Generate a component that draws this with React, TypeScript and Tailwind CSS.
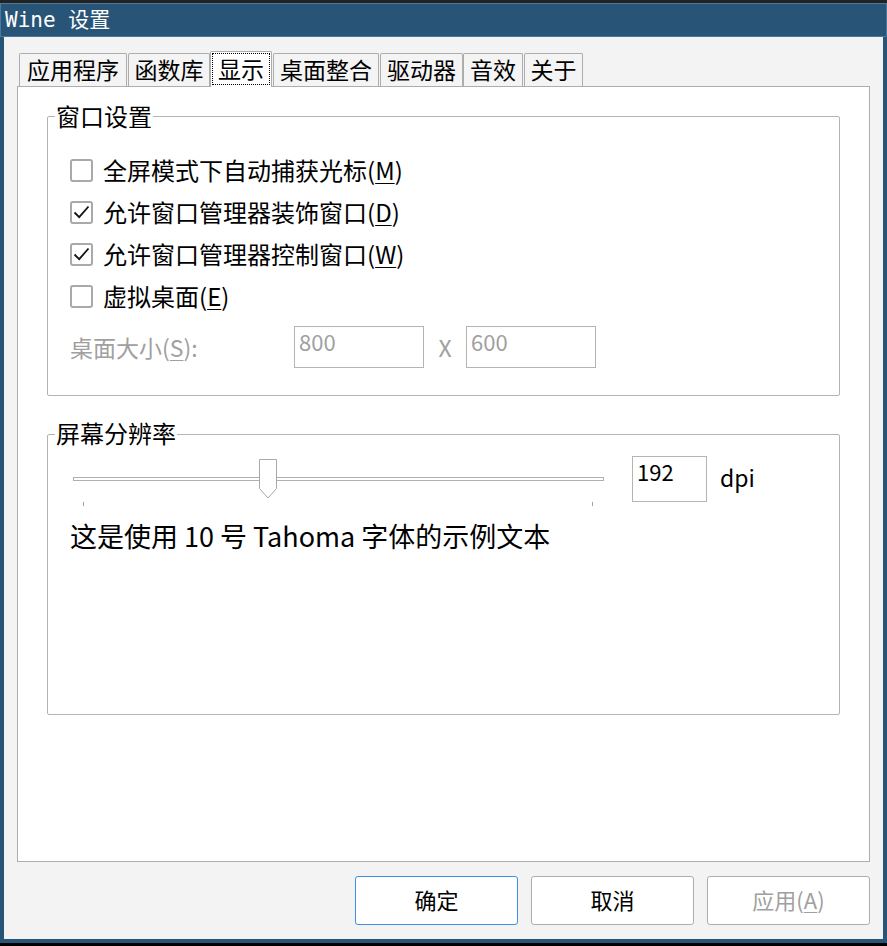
import React from "react";

function U({ c }: { c: string }) {
  return <span className="underline underline-offset-[3px] decoration-1">{c}</span>;
}

function Check({ checked }: { checked: boolean }) {
  return (
    <div className="w-[23px] h-[23px] rounded-[3px] border-2 border-[#a9a9a9] bg-white flex items-center justify-center shrink-0">
      {checked && (
        <svg width="19" height="19" viewBox="0 0 19 19">
          <path d="M2.5 9.5 L7.2 14.2 L16.5 3.5" fill="none" stroke="#111" strokeWidth="1.8" />
        </svg>
      )}
    </div>
  );
}

const tabs: { label: string; w: string; ml: string; sel?: boolean }[] = [
  { label: "应用程序", w: "w-[108px]", ml: "ml-[2px]" },
  { label: "函数库", w: "w-[82px]", ml: "ml-[1px]" },
  { label: "显示", w: "w-[62px]", ml: "ml-0", sel: true },
  { label: "桌面整合", w: "w-[106px]", ml: "ml-[1px]" },
  { label: "驱动器", w: "w-[83px]", ml: "ml-[1px]" },
  { label: "音效", w: "w-[60px]", ml: "ml-0" },
  { label: "关于", w: "w-[59px]", ml: "ml-[1px]" },
];

export default function App() {
  return (
    <div className="w-[887px] h-[946px] bg-black flex flex-col font-['Noto_Sans_CJK_SC','Noto_Sans',sans-serif]">
      <div className="h-[3px] bg-[#222222] shrink-0" />
      <div className="flex-1 flex flex-col bg-[#285577] min-h-0">
        {/* title bar */}
        <div className="h-[34px] shrink-0 border border-[#4c7899] flex items-center pl-[4px] text-white text-[21px] leading-[24px] font-['DejaVu_Sans_Mono','Noto_Sans_CJK_SC',monospace] whitespace-pre">
          Wine 设置
        </div>
        {/* body */}
        <div className="flex-1 mx-[4px] mb-[4px] bg-[#f3f3f3] px-[13px] flex flex-col min-h-0">
          {/* tabs */}
          <div className="h-[49px] shrink-0 flex items-end pt-[14px]">
            {tabs.map((t) =>
              t.sel ? (
                <div
                  key={t.label}
                  className={`${t.w} ${t.ml} h-[36px] -mb-px relative z-10 bg-white border border-b-0 border-[#adadad] rounded-t-[2px] p-[1px] pb-[2px] flex`}
                >
                  <div className="flex-1 border border-dotted border-black flex items-center justify-center pb-[3px] text-[23px] leading-[28px] text-black">
                    {t.label}
                  </div>
                </div>
              ) : (
                <div
                  key={t.label}
                  className={`${t.w} ${t.ml} h-[33px] bg-[#f4f4f4] border border-b-0 border-[#adadad] rounded-t-[2px] flex items-center justify-center pb-[3px] text-[23px] leading-[28px] text-black`}
                >
                  {t.label}
                </div>
              )
            )}
          </div>
          {/* panel */}
          <div className="h-[776px] shrink-0 border border-[#adadad] bg-white px-[29px] flex flex-col">
            {/* group 1 */}
            <div className="mt-[29px] h-[280px] border border-[#b4b4b4] rounded-[2px] flex flex-col">
              <div className="-mt-[15px] ml-[7px] px-[1px] bg-white w-fit text-[24px] leading-[28px] text-black">窗口设置</div>
              <div className="pt-[19px] flex flex-col">
                <div className="h-[42px] flex items-center pl-[22px] gap-[10px]">
                  <Check checked={false} />
                  <span className="text-[24px] leading-[30px] text-black">
                    全屏模式下自动捕获光标(<U c="M" />)
                  </span>
                </div>
                <div className="h-[42px] flex items-center pl-[22px] gap-[10px]">
                  <Check checked={true} />
                  <span className="text-[24px] leading-[30px] text-black">
                    允许窗口管理器装饰窗口(<U c="D" />)
                  </span>
                </div>
                <div className="h-[42px] flex items-center pl-[22px] gap-[10px]">
                  <Check checked={true} />
                  <span className="text-[24px] leading-[30px] text-black">
                    允许窗口管理器控制窗口(<U c="W" />)
                  </span>
                </div>
                <div className="h-[42px] flex items-center pl-[22px] gap-[10px]">
                  <Check checked={false} />
                  <span className="text-[24px] leading-[30px] text-black">
                    虚拟桌面(<U c="E" />)
                  </span>
                </div>
                <div className="mt-[9px] h-[42px] flex items-center pl-[22px]">
                  <span className="w-[224px] text-[23px] leading-[28px] text-[#a0a0a0]">
                    桌面大小(<U c="S" />):
                  </span>
                  <div className="w-[130px] h-[42px] border border-[#b4b4b4] bg-white pl-[4px] text-[22px] leading-[28px] text-[#a0a0a0]">
                    800
                  </div>
                  <span className="w-[42px] text-center text-[23px] leading-[28px] text-[#a0a0a0]">X</span>
                  <div className="w-[130px] h-[42px] border border-[#b4b4b4] bg-white pl-[4px] text-[22px] leading-[28px] text-[#a0a0a0]">
                    600
                  </div>
                </div>
              </div>
            </div>
            {/* group 2 */}
            <div className="mt-[38px] h-[281px] border border-[#b4b4b4] rounded-[2px] flex flex-col">
              <div className="-mt-[16px] ml-[7px] px-[1px] bg-white w-fit text-[24px] leading-[28px] text-black">屏幕分辨率</div>
              <div className="mt-[9px] flex items-start pl-[25px]">
                <div className="relative w-[531px] h-[50px] flex flex-col">
                  <div className="mt-[21px] h-[4px] border border-[#b0b0b0] bg-white" />
                  <div className="mt-[21px] h-[4px] flex justify-between pl-[10px] pr-[11px]">
                    <div className="w-px h-[4px] bg-[#a0a0a0]" />
                    <div className="w-px h-[4px] bg-[#a0a0a0]" />
                  </div>
                  <svg className="absolute left-[186px] top-[3px]" width="19" height="40" viewBox="0 0 19 40">
                    <path d="M0.5 0.5 H17.5 V29.5 L9 39 L0.5 29.5 Z" fill="white" stroke="#a8a8a8" strokeWidth="1" />
                  </svg>
                </div>
                <div className="ml-[28px] w-[75px] h-[46px] border border-[#b4b4b4] bg-white pl-[4px] text-[22px] leading-[28px] text-black">
                  192
                </div>
                <div className="ml-[13px] h-[42px] flex items-center text-[23px] leading-[28px] text-black">dpi</div>
              </div>
              <div className="mt-[13px] pl-[22px] text-[27px] leading-[34px] text-black whitespace-pre">
                这是使用 10 号 Tahoma 字体的示例文本
              </div>
            </div>
          </div>
          {/* buttons */}
          <div className="mt-[14px] flex justify-end gap-[13px]">
            <div className="w-[163px] h-[49px] rounded-[3px] border border-[#3d8fe4] bg-white flex items-center justify-center pb-[4px] text-[22px] leading-[28px] text-black">
              确定
            </div>
            <div className="w-[163px] h-[49px] rounded-[3px] border border-[#adadad] bg-white flex items-center justify-center pb-[4px] text-[22px] leading-[28px] text-black">
              取消
            </div>
            <div className="w-[163px] h-[49px] rounded-[3px] border border-[#adadad] bg-white flex items-center justify-center pb-[4px] text-[22px] leading-[28px] text-[#a0a0a0]">
              应用(<U c="A" />)
            </div>
          </div>
        </div>
      </div>
      <div className="h-[3px] bg-black shrink-0" />
    </div>
  );
}
